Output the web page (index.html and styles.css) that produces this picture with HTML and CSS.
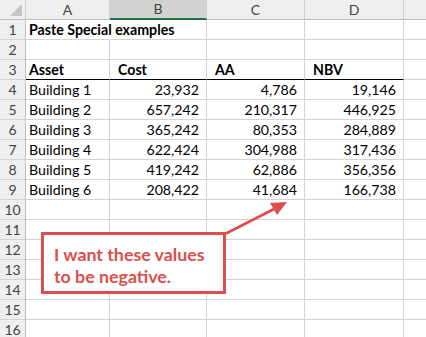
FILE: index.html
```html
<!DOCTYPE html>
<html lang="en">
<head>
  <meta charset="UTF-8">
  <meta name="viewport" content="width=device-width, initial-scale=1.0">
  <title>Paste Special examples</title>
  <link rel="stylesheet" href="styles.css">
</head>
<body>
  <div class="sheet">
    <table class="grid">
      <colgroup>
        <col class="col-rownum">
        <col class="col-a">
        <col class="col-b">
        <col class="col-c">
        <col class="col-d">
        <col class="col-e">
      </colgroup>
      <thead>
        <tr>
          <th class="corner"><span class="corner-mark"></span></th>
          <th>A</th>
          <th class="selected">B</th>
          <th>C</th>
          <th>D</th>
          <th></th>
        </tr>
      </thead>
      <tbody>
        <tr><td class="rownum">1</td><td class="bold spill">Paste Special examples</td><td></td><td></td><td></td><td></td></tr>
        <tr><td class="rownum">2</td><td></td><td></td><td></td><td></td><td></td></tr>
        <tr class="heading"><td class="rownum">3</td><td class="bold">Asset</td><td class="bold indent">Cost</td><td class="bold indent">AA</td><td class="bold indent">NBV</td><td class="no-rule"></td></tr>
        <tr><td class="rownum">4</td><td>Building 1</td><td class="num">23,932</td><td class="num">4,786</td><td class="num">19,146</td><td></td></tr>
        <tr><td class="rownum">5</td><td>Building 2</td><td class="num">657,242</td><td class="num">210,317</td><td class="num">446,925</td><td></td></tr>
        <tr><td class="rownum">6</td><td>Building 3</td><td class="num">365,242</td><td class="num">80,353</td><td class="num">284,889</td><td></td></tr>
        <tr><td class="rownum">7</td><td>Building 4</td><td class="num">622,424</td><td class="num">304,988</td><td class="num">317,436</td><td></td></tr>
        <tr><td class="rownum">8</td><td>Building 5</td><td class="num">419,242</td><td class="num">62,886</td><td class="num">356,356</td><td></td></tr>
        <tr><td class="rownum">9</td><td>Building 6</td><td class="num">208,422</td><td class="num">41,684</td><td class="num">166,738</td><td></td></tr>
        <tr><td class="rownum">10</td><td></td><td></td><td></td><td></td><td></td></tr>
        <tr><td class="rownum">11</td><td></td><td></td><td></td><td></td><td></td></tr>
        <tr><td class="rownum">12</td><td></td><td></td><td></td><td></td><td></td></tr>
        <tr><td class="rownum">13</td><td></td><td></td><td></td><td></td><td></td></tr>
        <tr><td class="rownum">14</td><td></td><td></td><td></td><td></td><td></td></tr>
        <tr><td class="rownum">15</td><td></td><td></td><td></td><td></td><td></td></tr>
        <tr><td class="rownum">16</td><td></td><td></td><td></td><td></td><td></td></tr>
      </tbody>
    </table>

    <!-- annotation drawn on top of the sheet -->
    <div class="callout">I want these values<br>to be negative.</div>
    <svg class="arrow" width="426" height="337" viewBox="0 0 426 337">
      <line x1="227" y1="233" x2="276" y2="208" stroke="#d9504d" stroke-width="3" stroke-linecap="round"/>
      <polygon points="287,202 270,203 277,215" fill="#d9504d"/>
    </svg>
  </div>
</body>
</html>
```

FILE: styles.css
```css
body {
  margin: 0;
  padding: 0;
  background-color: #fff;
  font-family: Lato, "Liberation Sans", sans-serif;
  overflow: hidden;
}

.sheet {
  position: relative;
  width: 426px;
  height: 337px;
  overflow: hidden;
}

.grid {
  table-layout: fixed;
  border-collapse: separate;
  border-spacing: 0;
  width: 466px;
  font-size: 14.2px;
  color: #000;
}

.col-rownum { width: 26px; }
.col-a { width: 84px; }
.col-b { width: 97px; }
.col-c { width: 98px; }
.col-d { width: 99px; }
.col-e { width: 62px; }

th, td {
  box-sizing: border-box;
  height: 20px;
  padding: 0 3px;
  line-height: 19px;
  border-right: 1px solid #d4d4d4;
  border-bottom: 1px solid #d4d4d4;
  white-space: nowrap;
  text-align: left;
}

th {
  background-color: #efefef;
  color: #444;
  font-weight: normal;
  font-size: 14px;
  text-align: center;
  border-right-color: #cfcfcf;
  border-bottom-color: #bcbcbc;
}

th.selected {
  background-color: #d3d3d3;
  color: #3b4a40;
  border-bottom: 2px solid #217346;
  line-height: 18px;
}

.corner {
  position: relative;
}

.corner-mark {
  position: absolute;
  right: 3px;
  bottom: 3px;
  width: 0;
  height: 0;
  border-left: 12px solid transparent;
  border-bottom: 12px solid #c4c4c4;
}

td.rownum {
  background-color: #efefef;
  color: #444;
  font-size: 14px;
  text-align: center;
  padding: 0;
  border-right-color: #bcbcbc;
  border-bottom-color: #d3d3d3;
}

.bold {
  font-weight: bold;
}

.spill {
  overflow: visible;
  border-right-color: #fff;
}

.indent {
  padding-left: 8px;
}

.num {
  text-align: right;
  padding-right: 7px;
}

.heading td {
  border-bottom-color: #000;
}

.heading td.rownum {
  border-bottom-color: #d3d3d3;
}

.heading td.no-rule {
  border-bottom-color: #d4d4d4;
}

.callout {
  position: absolute;
  left: 41px;
  top: 232px;
  width: 185px;
  height: 62px;
  box-sizing: border-box;
  padding: 8px 0 0 10px;
  background-color: #fff;
  border: 3px solid #d9504d;
  color: #d9504d;
  font-weight: bold;
  font-size: 17.8px;
  line-height: 22px;
}

.arrow {
  position: absolute;
  left: 0;
  top: 0;
}
```
